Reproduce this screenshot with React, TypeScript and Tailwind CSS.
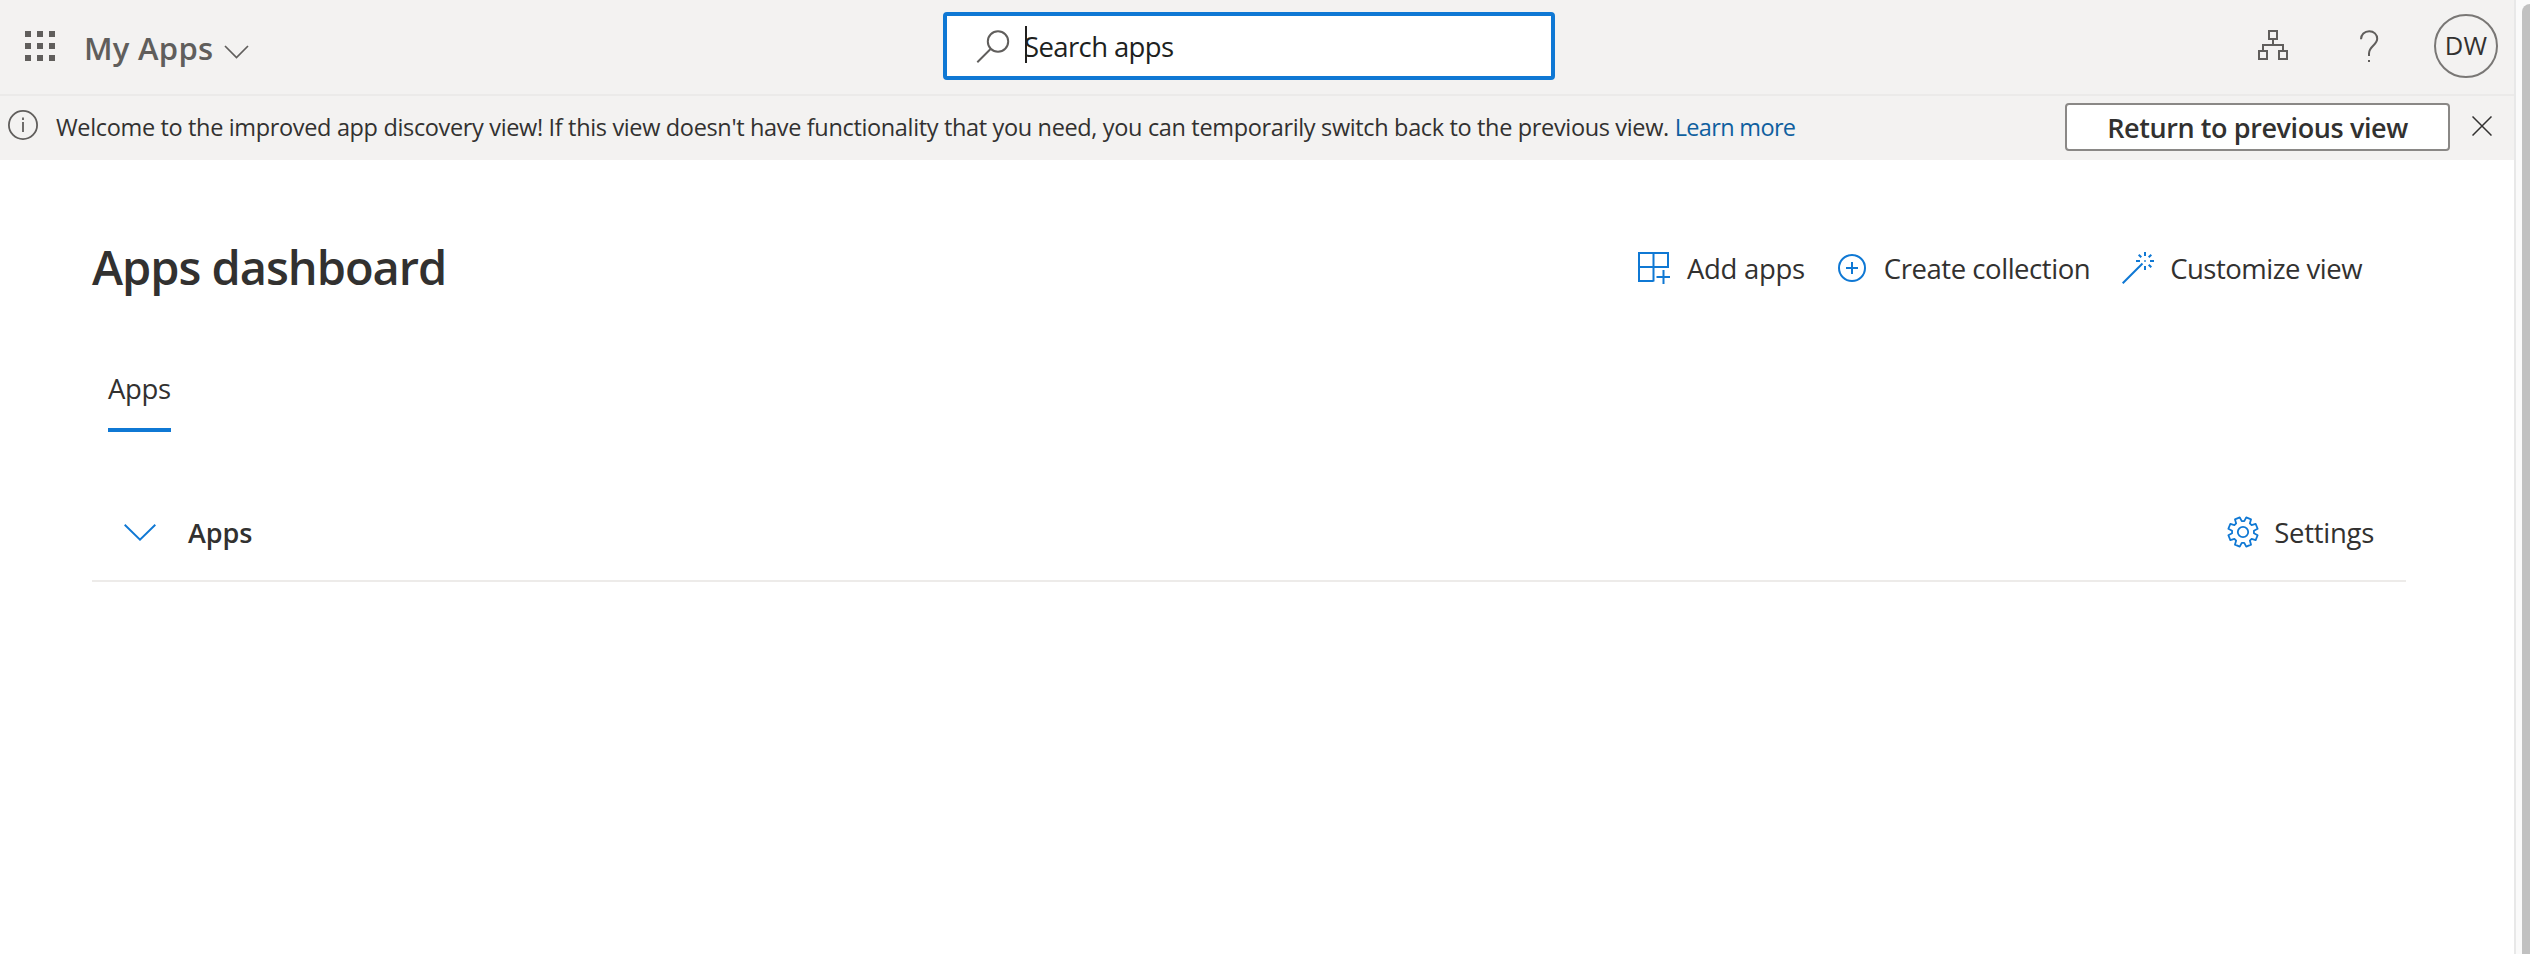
const BLUE = "#0f78d4";
const GREY = "#605e5c";

function gearPath() {
  const pts: string[] = [];
  const at = (deg: number, r: number) => {
    const a = (deg * Math.PI) / 180;
    pts.push(`${(16 + r * Math.sin(a)).toFixed(2)} ${(16 - r * Math.cos(a)).toFixed(2)}`);
  };
  for (let k = 0; k < 8; k++) {
    const c = k * 45;
    at(c - 12.5, 15);
    at(c - 6.5, 11);
    at(c + 6.5, 11);
    at(c + 12.5, 15);
  }
  return `M${pts.join("L")}Z`;
}

function Waffle() {
  return (
    <svg className="mb-[2px] h-[30px] w-[30px]" viewBox="0 0 30 30" fill={GREY}>
      {[0, 12, 24].map((y) =>
        [0, 12, 24].map((x) => <rect key={`${x}-${y}`} x={x} y={y} width="6" height="6" />),
      )}
    </svg>
  );
}

function Header() {
  return (
    <header className="grid h-24 grid-cols-[943px_612px_1fr] items-start border-b-2 border-[#ebeae9]">
      <div className="flex h-[94px] items-center pl-[25px]">
        <Waffle />
        <span className="ml-[29px] pt-[2px] text-[31px] font-semibold tracking-[0.28px] text-[#605e5c]">My Apps</span>
        <svg className="mt-[10px] ml-[11px] h-[14px] w-[25px]" viewBox="0 0 25 14" fill="none" stroke={GREY} strokeWidth="1.7">
          <path d="M1 1L12.5 12.5L24 1" />
        </svg>
      </div>
      <div className="mt-3 flex h-[68px] items-center rounded-[4px] border-4 border-[#0f78d4] bg-white pl-[29px]">
        <svg className="h-[33px] w-[34px]" viewBox="0 0 34 33" fill="none" stroke={GREY} strokeWidth="2">
          <circle cx="22" cy="11.5" r="10.2" />
          <path d="M14.8 18.8L1.3 32.2" />
        </svg>
        <div className="relative ml-[14px] pt-[2px] text-[27.5px] tracking-[-0.61px] text-[#201f1e]">
          <span className="absolute top-[2px] left-[1px] h-[37px] w-[2px] bg-[#201f1e]" />
          Search apps
        </div>
      </div>
      <div className="flex h-[92px] items-center justify-end pr-4">
        <svg className="mt-[-2px] h-[30px] w-[30px]" viewBox="0 0 30 30" fill="none" stroke={GREY} strokeWidth="2">
          <path d="M11 1h8v8h-8zM1 21h8v8H1zM21 21h8v8h-8zM15 9v6M5 21v-6h20v6" />
        </svg>
        <svg className="ml-[71px] h-[32px] w-[20px]" viewBox="0 0 20 32" fill="none" stroke={GREY} strokeWidth="2">
          <path d="M2 9.2C2 4.6 5.500 1.200 10.200 1.200S18.200 4.500 18.200 8.800C18.200 15.200 10 16 10 23.500V26" />
          <rect x="9" y="30" width="2" height="2" fill={GREY} stroke="none" />
        </svg>
        <div className="ml-[55px] flex h-16 w-16 items-center justify-center rounded-full border-2 border-[#797775] text-[25.5px] tracking-[0.3px] text-[#323130]">
          <span className="-mt-[2px]">DW</span>
        </div>
      </div>
    </header>
  );
}

function Banner() {
  return (
    <div className="flex h-16 pl-2">
      <svg className="mt-[14px] h-[30px] w-[30px]" viewBox="0 0 30 30" fill="none" stroke={GREY} strokeWidth="1.8">
        <circle cx="15" cy="15" r="14.1" />
        <path d="M15 12v10M15 7.500v2.500" />
      </svg>
      <p className="ml-[18px] h-[62px] text-[23.5px] leading-[63px] tracking-[-0.347px] whitespace-nowrap text-[#323130]">
        Welcome to the improved app discovery view! If this view doesn't have functionality that you need, you can
        temporarily switch back to the previous view.{" "}
        <a className="tracking-[-0.66px] text-[#0f609f]">Learn more</a>
      </p>
      <button className="mt-[7px] ml-auto h-12 w-[385px] rounded-[4px] border-2 border-[#8a8886] bg-white text-[27px] leading-[44px] font-semibold tracking-[-0.4px] text-[#323130]">
        <span className="block pt-px">Return to previous view</span>
      </button>
      <svg className="mt-5 mr-[22px] ml-[22px] h-5 w-5" viewBox="0 0 20 20" fill="none" stroke="#323130" strokeWidth="1.500">
        <path d="M0.500 0.500L19.500 19.500M19.500 0.500L0.500 19.500" />
      </svg>
    </div>
  );
}

function TitleRow() {
  return (
    <div className="flex h-[216px] items-center">
      <h1 className="pb-[2px] text-[47px] font-semibold tracking-[-1.03px] text-[#323130]">Apps dashboard</h1>
      <div className="ml-auto flex items-center pr-[44px] text-[27.5px] whitespace-nowrap text-[#323130]">
        <svg className="h-8 w-8" viewBox="0 0 32 32" fill="none" stroke={BLUE} strokeWidth="2">
          <path d="M1 1h29v14H1zM15.500 1v28.500M1 15v14h14.500M25.500 18v14M18.500 25h14" />
        </svg>
        <span className="ml-[17px] pt-[2px] tracking-[-0.3px]">Add apps</span>
        <svg className="ml-[33px] h-[28px] w-[28px]" viewBox="0 0 28 28" fill="none" stroke={BLUE} strokeWidth="2">
          <circle cx="14" cy="14" r="13" />
          <path d="M14 8v12M8 14h12" />
        </svg>
        <span className="ml-[18px] pt-[2px] tracking-[-0.45px]">Create collection</span>
        <svg className="ml-[32px] h-8 w-8" viewBox="0 0 32 32" fill="none" stroke={BLUE} strokeWidth="2">
          <path d="M0.700 31.300L20.500 11.500" />
          <path d="M23 0v4M23 14v4M14 9h4M28 9h4M16.700 2.700l2.600 2.600M26.700 12.700l2.600 2.600M29.300 2.700l-2.600 2.600" />
          <rect x="22.200" y="8.200" width="1.600" height="1.600" fill={BLUE} stroke="none" />
        </svg>
        <span className="ml-[16px] pt-[2px] tracking-[-0.51px]">Customize view</span>
      </div>
    </div>
  );
}

export default function App() {
  return (
    <div className="flex h-[954px] w-[2530px] overflow-hidden bg-white font-['Open_Sans','Noto_Sans',sans-serif]">
      <div className="flex w-[2514px] flex-col">
        <div className="bg-[#f3f2f1]">
          <Header />
          <Banner />
        </div>
        <main className="flex flex-col pr-[108px] pl-[92px]">
          <TitleRow />
          <div className="ml-4 w-[63px] border-b-4 border-[#0f78d4] pt-px pb-[27px] text-[27.5px] leading-6 tracking-[-0.35px] text-[#323130]">
            Apps
          </div>
          <section className="flex h-[150px] items-center border-b-2 border-[#edebe9] pt-[52px] text-[#323130]">
            <svg className="ml-8 h-[17px] w-8" viewBox="0 0 32 17" fill="none" stroke={BLUE} strokeWidth="1.900">
              <path d="M0.700 0.700L16 15.700L31.300 0.700" />
            </svg>
            <h2 className="ml-8 pt-[2px] text-[27px] font-semibold tracking-[-0.1px]">Apps</h2>
            <svg className="ml-auto h-8 w-8" viewBox="0 0 32 32" fill="none" stroke={BLUE} strokeWidth="1.800">
              <path d={gearPath()} strokeLinejoin="round" />
              <circle cx="16" cy="16" r="5.200" />
            </svg>
            <span className="mr-[32px] ml-[15px] pt-[2px] text-[27.5px] tracking-[-0.27px]">Settings</span>
          </section>
        </main>
      </div>
      <div className="flex w-4 justify-end border-l-2 border-[#e8e8e8] bg-[#fafafa] pt-1">
        <div className="w-2 rounded-tl-[8px] bg-[#c1c1c1]" />
      </div>
    </div>
  );
}
